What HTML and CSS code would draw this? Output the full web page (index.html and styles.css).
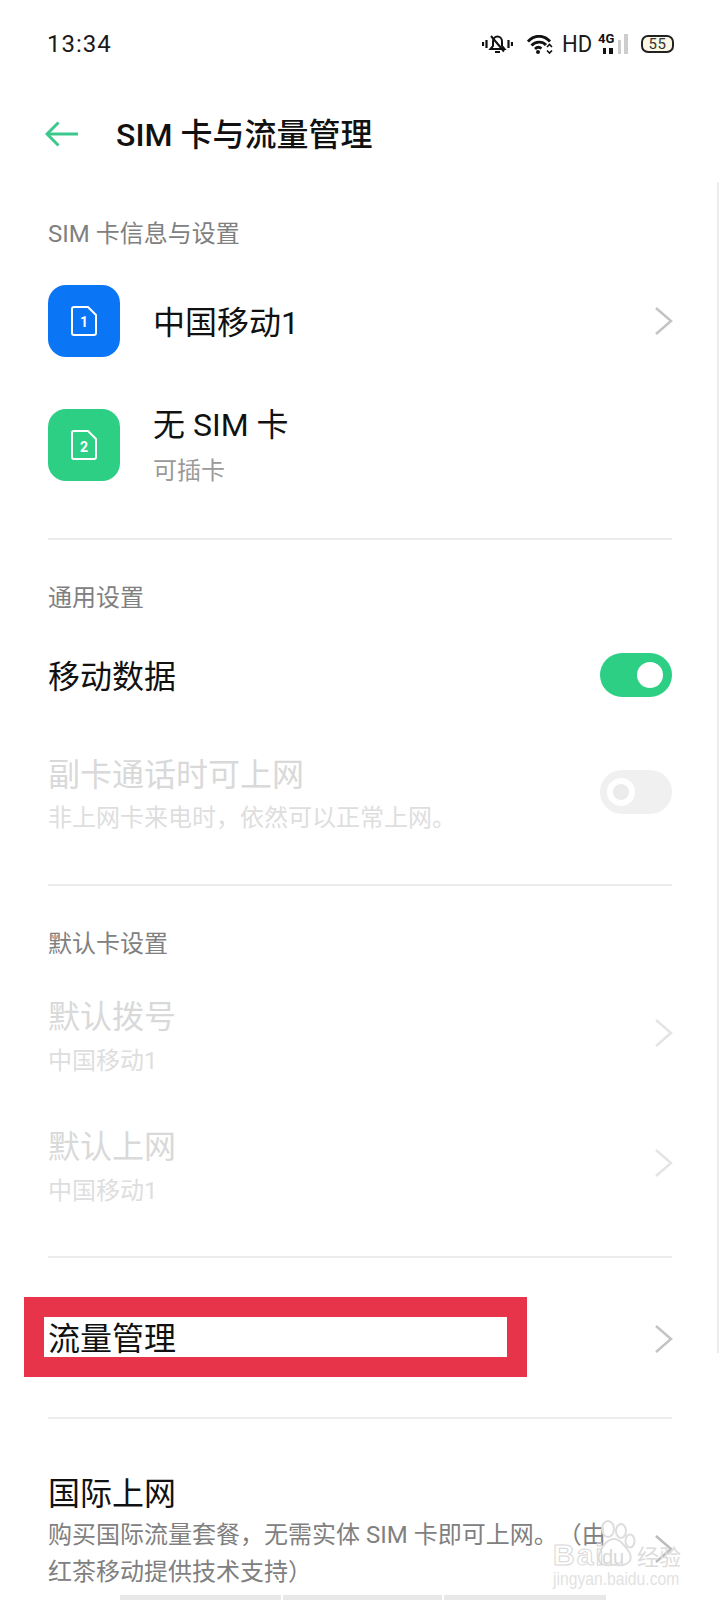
FILE: index.html
```html
<!DOCTYPE html>
<html lang="zh-CN">
<head>
<meta charset="utf-8">
<title>SIM 卡与流量管理</title>
<link rel="stylesheet" href="styles.css">
</head>
<body>
<div class="screen">
  <div class="statusbar">
    <span class="time">13:34</span>
    <div class="status-icons">
      <svg class="ic-bell" width="31" height="18" viewBox="0 0 31 18" fill="none" stroke="#111" stroke-width="2">
        <path d="M8.500 14h14l-2.500-3V6.500c0-3-2-5-4.500-5s-4.500 2-4.500 5V11z"/>
        <path d="M13 17h5"/>
        <path d="M9 1l13 15.500"/>
        <path d="M1 7v4M4.500 5v8M26.500 5v8M30 7v4" stroke-width="2.200"/>
      </svg>
      <svg class="ic-wifi" width="26" height="19" viewBox="0 0 26 19" fill="none" stroke="#111" stroke-width="2.800">
        <path d="M1 6.500C7-.5 17-.5 23 6.500"/>
        <path d="M4.500 10.500C8.500 6 15.500 6 19 10"/>
        <path d="M8 14c2-2 4.500-2 6.500-.5"/>
        <circle cx="11" cy="17" r="2" fill="#111" stroke="none"/>
        <path d="M20 12l2.500-2.500L25 12M20 15.500l2.500 2.500 2.500-2.500" stroke-width="1.700"/>
      </svg>
      <span class="hd">HD</span>
      <div class="signal">
        <span class="net">4G</span>
        <svg class="bars" width="30" height="20" viewBox="0 0 30 20">
          <rect x="5" y="14" width="3" height="6" fill="#111"/>
          <rect x="11" y="14" width="4" height="6" fill="#111"/>
          <rect x="20" y="6" width="3" height="14" fill="#cdcdcd"/>
          <rect x="26" y="0" width="4" height="20" fill="#cdcdcd"/>
        </svg>
      </div>
      <div class="battery"><span class="battery-level">55</span></div>
    </div>
  </div>

  <div class="appbar">
    <svg class="back" width="34" height="26" viewBox="0 0 34 26" fill="none" stroke="#3cc88c" stroke-width="3">
      <path d="M2 13H33"/>
      <path d="M13.500 1.500L2 13l11.500 11.500"/>
    </svg>
    <h1 class="title">SIM 卡与流量管理</h1>
  </div>

  <section class="group">
    <h2 class="label">SIM 卡信息与设置</h2>
    <div class="sim-row first">
      <div class="sim-icon blue">
        <svg width="26" height="30" viewBox="0 0 26 30" fill="none" stroke="#fff" stroke-width="2">
          <path d="M3 1h14l8 8v18a2 2 0 0 1-2 2H3a2 2 0 0 1-2-2V3a2 2 0 0 1 2-2z"/>
          <text x="13" y="21" class="sim-num">1</text>
        </svg>
      </div>
      <div class="grow sim-one"><div class="row-title">中国移动1</div></div>
      <svg class="chev" width="20" height="30" viewBox="0 0 20 30" fill="none" stroke="#c4c4c4" stroke-width="2.500"><path d="M2 2l15 13L2 28"/></svg>
    </div>
    <div class="sim-row">
      <div class="sim-icon green">
        <svg width="26" height="30" viewBox="0 0 26 30" fill="none" stroke="#fff" stroke-width="2">
          <path d="M3 1h14l8 8v18a2 2 0 0 1-2 2H3a2 2 0 0 1-2-2V3a2 2 0 0 1 2-2z"/>
          <text x="13" y="22" class="sim-num">2</text>
        </svg>
      </div>
      <div class="grow sim-text">
        <div class="row-title">无 SIM 卡</div>
        <div class="sub">可插卡</div>
      </div>
    </div>
  </section>

  <section class="group">
    <h2 class="label">通用设置</h2>
    <div class="row data-row">
      <div class="grow row-title">移动数据</div>
      <div class="toggle on"><span class="knob"></span></div>
    </div>
    <div class="row secondary-row">
      <div class="grow">
        <div class="row-title off">副卡通话时可上网</div>
        <div class="sub off">非上网卡来电时，依然可以正常上网。</div>
      </div>
      <div class="toggle disabled"><span class="knob"></span></div>
    </div>
  </section>

  <section class="group">
    <h2 class="label">默认卡设置</h2>
    <div class="row default-row first-default">
      <div class="grow">
        <div class="row-title off">默认拨号</div>
        <div class="sub off">中国移动1</div>
      </div>
      <svg class="chev faint" width="20" height="30" viewBox="0 0 20 30" fill="none" stroke="#e4e4e4" stroke-width="2.500"><path d="M2 2l15 13L2 28"/></svg>
    </div>
    <div class="row default-row">
      <div class="grow">
        <div class="row-title off">默认上网</div>
        <div class="sub off">中国移动1</div>
      </div>
      <svg class="chev faint" width="20" height="30" viewBox="0 0 20 30" fill="none" stroke="#e4e4e4" stroke-width="2.500"><path d="M2 2l15 13L2 28"/></svg>
    </div>
  </section>

  <section class="group flow-group">
    <div class="row flow-row">
      <div class="grow row-title">流量管理</div>
      <svg class="chev" width="20" height="30" viewBox="0 0 20 30" fill="none" stroke="#c4c4c4" stroke-width="2.500"><path d="M2 2l15 13L2 28"/></svg>
      <div class="annotation"></div>
    </div>
  </section>

  <section class="group last">
    <div class="row intl-row">
      <div class="grow">
        <div class="row-title">国际上网</div>
        <div class="desc">购买国际流量套餐，无需实体 SIM 卡即可上网。（由<br>红茶移动提供技术支持）</div>
      </div>
      <svg class="chev low" width="20" height="30" viewBox="0 0 20 30" fill="none" stroke="#bdbdbd" stroke-width="2.500"><path d="M2 2l15 13L2 28"/></svg>
    </div>
  </section>

  <div class="scrollbar"></div>

  <div class="watermark">
    <svg class="paw" width="44" height="50" viewBox="0 0 44 50" fill="none" stroke="#dddddd" stroke-width="2">
      <ellipse cx="12" cy="9" rx="6" ry="8"/>
      <ellipse cx="25" cy="11" rx="5" ry="7"/>
      <ellipse cx="34" cy="21" rx="4.500" ry="6.500"/>
      <path d="M17 19c6-1 10 5 14 10 5 6 6 14-4 16-5 1-8-1-13 0C6 46 1 42 3 35c2-7 7-15 14-16z"/>
    </svg>
    <div class="wm-top"><span class="wm-bai">Bai</span><span class="wm-du">du</span><span class="wm-cn">经验</span></div>
    <div class="wm-url">jingyan.baidu.com</div>
  </div>

  <div class="navhint">
    <span class="seg s1"></span><span class="seg s2"></span><span class="seg s3"></span>
  </div>
</div>
</body>
</html>
```
FILE: styles.css
```css
* { box-sizing: border-box; }
html, body { margin: 0; padding: 0; background: #fff; }
body { font-family: Roboto, "Noto Sans CJK SC", sans-serif; color: #111; text-spacing-trim: space-all; }
.screen { position: relative; width: 720px; height: 1600px; overflow: hidden; background: #fff; }

.statusbar { height: 88px; padding: 0 46px 0 47px; display: flex; align-items: center; justify-content: space-between; }
.time { font-size: 24px; letter-spacing: 1px; color: #1a1a1a; }
.status-icons { display: flex; align-items: center; }
.ic-bell { margin-right: 14px; }
.ic-wifi { margin-right: 9px; }
.hd { font-size: 24px; line-height: 24px; color: #1a1a1a; width: 27px; margin-right: 9px; transform: scaleX(0.92); transform-origin: left; }
.signal { position: relative; width: 30px; height: 20px; margin-right: 13px; }
.bars { display: block; }
.net { position: absolute; left: 0; top: -2px; font-size: 13px; line-height: 14px; font-weight: 700; color: #111; }
.battery { width: 33px; height: 18px; border: 2px solid #222; border-radius: 7px; background: #fbf8e6; display: flex; align-items: center; justify-content: center; }
.battery-level { font-size: 15px; line-height: 14px; color: #333; letter-spacing: 0.5px; }

.appbar { height: 92px; padding-left: 45px; display: flex; align-items: center; }
.title { margin: 2px 0 0 37px; font-size: 32px; line-height: 44px; font-weight: 500; color: #111; }

.group { margin: 0 48px; border-bottom: 2px solid #ececec; }
.group.last { border-bottom: 0; }
.label { margin: 0; font-size: 24px; line-height: 34px; font-weight: 400; color: #808080; }
.group:nth-of-type(1) .label { margin-top: 37px; }
.group:nth-of-type(2) .label, .group:nth-of-type(3) .label { margin-top: 41px; }

.grow { flex: 1; min-width: 0; }
.row, .sim-row { display: flex; align-items: center; }
.row-title { font-size: 32px; line-height: 44px; color: #111; }
.row-title.off { color: #d9d9d9; }
.sub { font-size: 24px; line-height: 34px; color: #9a9a9a; margin-top: 4px; }
.sub.off { color: #dedede; }
.desc { font-size: 24px; line-height: 37px; color: #808080; margin-top: 1px; white-space: nowrap; }

.sim-row { height: 72px; margin-top: 52px; }
.sim-row.first { margin-top: 34px; }
.sim-row:last-child { margin-bottom: 57px; }
.sim-icon { width: 72px; height: 72px; border-radius: 18px; margin-right: 33px; display: flex; align-items: center; justify-content: center; }
.sim-icon.blue { background: #0a76f6; }
.sim-icon.green { background: #2dcf84; }
.sim-num { font-family: Roboto, sans-serif; font-size: 14px; font-weight: 700; fill: #fff; stroke: none; text-anchor: middle; }
.sim-one { padding-top: 4px; }
.sim-text { padding-top: 1px; }
.sim-text .sub { margin-top: 7px; }

.chev { flex: none; margin-right: -2px; }
.chev.faint { margin-bottom: 7px; }
.chev.low { margin-top: 34px; }

.data-row { height: 70px; margin-top: 27px; }
.secondary-row { margin-top: 41px; margin-bottom: 49px; }
.toggle { position: relative; width: 72px; height: 44px; border-radius: 22px; flex: none; margin-top: -4px; }
.toggle.on { background: #2dcf84; }
.toggle.disabled { background: #f0f0f0; }
.knob { position: absolute; top: 9px; width: 26px; height: 26px; border-radius: 50%; background: #fff; }
.toggle.on .knob { right: 9px; }
.toggle.disabled .knob { left: 7px; top: 8px; width: 28px; height: 28px; background: #ebebeb; border: 6px solid #fff; }

.default-row .sub { margin-top: 5px; }
.default-row { margin-top: 34px; }
.first-default { margin-top: 34px; }
.default-row:last-child { margin-top: 47px; margin-bottom: 48px; }

.flow-row { position: relative; height: 44px; margin-top: 59px; margin-bottom: 56px; }
.annotation { position: absolute; left: -24px; top: -20px; width: 503px; height: 80px; border: 20px solid #e8344a; pointer-events: none; }

.intl-row { margin-top: 53px; }
.scrollbar { position: absolute; right: 1px; top: 182px; width: 2px; height: 1171px; background: #ececec; }

.watermark { position: absolute; left: 552px; top: 1518px; width: 140px; height: 70px; color: #dcdcdc; }
.paw { position: absolute; left: 44px; top: 2px; }
.wm-bai { position: absolute; left: 1px; top: 22px; font: 700 30px/30px "Liberation Sans", sans-serif; letter-spacing: 2px; color: transparent; -webkit-text-stroke: 1px #d8d8d8; }
.wm-du { position: absolute; left: 50px; top: 27px; font: 400 20px/24px "Liberation Sans", sans-serif; color: #d8d8d8; }
.wm-cn { position: absolute; left: 85px; top: 22px; font: 400 22px/30px "Noto Sans CJK SC", sans-serif; color: #dcdcdc; }
.wm-url { position: absolute; left: 1px; top: 51px; font: 400 18px/20px "Liberation Sans", sans-serif; color: #e2e2e2; white-space: nowrap; transform: scaleX(0.87); transform-origin: left; }

.navhint { position: absolute; left: 120px; bottom: 0; display: flex; gap: 2px; }
.seg { display: block; height: 5px; background: #e8e8e8; }
.s1 { width: 161px; }
.s2 { width: 159px; }
.s3 { width: 162px; }
```
